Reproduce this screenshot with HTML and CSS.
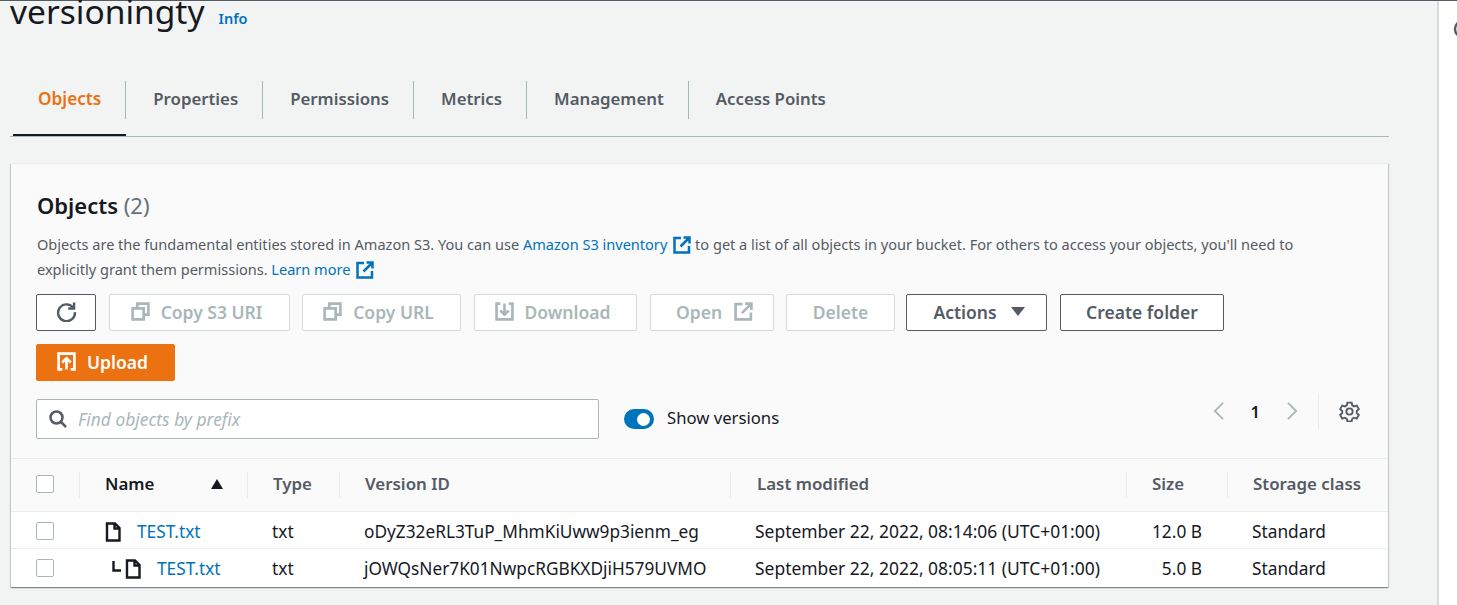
FILE: index.html
```html
<!DOCTYPE html>
<html lang="en">
<head>
  <meta charset="UTF-8">
  <title>versioningty - S3 bucket</title>
  <link rel="stylesheet" href="styles.css">
</head>
<body>
  <div class="page">
    <main class="content">
      <div class="title-row">
        <h1>versioningty</h1>
        <a class="info" href="#">Info</a>
      </div>

      <nav class="tabs">
        <a class="tab active" href="#">Objects</a>
        <a class="tab" href="#">Properties</a>
        <a class="tab" href="#">Permissions</a>
        <a class="tab" href="#">Metrics</a>
        <a class="tab" href="#">Management</a>
        <a class="tab" href="#">Access Points</a>
      </nav>

      <section class="card">
        <div class="card-head">
          <h2>Objects <span class="count">(2)</span></h2>
          <p class="desc">Objects are the fundamental entities stored in Amazon S3. You can use <a href="#">Amazon S3 inventory<svg class="ext" viewBox="0 0 18 18"><path d="M8 2H1.500v14.500H16V10M10.500 1.500h6v6M16 2L7.500 10.500"/></svg></a> to get a list of all objects in your bucket. For others to access your objects, you'll need to explicitly grant them permissions. <a href="#">Learn more<svg class="ext" viewBox="0 0 18 18"><path d="M8 2H1.500v14.500H16V10M10.500 1.500h6v6M16 2L7.500 10.500"/></svg></a></p>

          <div class="actions">
            <button class="btn refresh"><svg viewBox="0 0 20 20"><path d="M16.500 6.500A8 8 0 1 0 18 10.500"/><path d="M17.200 1.500v5.600h-5.600"/></svg></button>
            <button class="btn off lead w-s3"><svg viewBox="0 0 18 18"><path d="M1.500 6h10.500v10.500H1.500zM6 6V1.500h10.500V12H12"/></svg>Copy S3 URI</button>
            <button class="btn off lead w-url"><svg viewBox="0 0 18 18"><path d="M1.500 6h10.500v10.500H1.500zM6 6V1.500h10.500V12H12"/></svg>Copy URL</button>
            <button class="btn off lead w-dl"><svg viewBox="0 0 18 18"><path d="M5 1.500H1.500v15h15v-15H13M9 1.500V12M5 8l4 4 4-4"/></svg>Download</button>
            <button class="btn off trail w-open">Open<svg class="after" viewBox="0 0 18 18"><path d="M8 2H1.500v14.500H16V10M10.500 1.500h6v6M16 2L7.500 10.500"/></svg></button>
            <button class="btn off w-del">Delete</button>
            <button class="btn trail w-act">Actions<span class="caret"></span></button>
            <button class="btn w-new">Create folder</button>
            <button class="btn primary lead"><svg viewBox="0 0 18 18"><path d="M5 16.500H1.500v-15h15v15H13M9 16.500V6M5 10l4-4 4 4"/></svg>Upload</button>
          </div>

          <div class="filter-row">
            <div class="search">
              <svg viewBox="0 0 18 18"><circle cx="7.500" cy="7.500" r="6"/><path d="M12 12l5 5"/></svg>
              <span>Find objects by prefix</span>
            </div>
            <div class="toggle"><span class="knob"></span></div>
            <span class="toggle-label">Show versions</span>
            <div class="pager">
              <svg class="chev" viewBox="0 0 14 22"><path d="M12 2L3 11l9 9"/></svg>
              <span class="page-no">1</span>
              <svg class="chev" viewBox="0 0 14 22"><path d="M2 2l9 9-9 9"/></svg>
              <span class="pager-sep"></span>
              <svg class="gear" viewBox="0 0 20 20"><circle cx="10" cy="10" r="3"/><path d="M8 1.500h4l.6 2.600 1.700 1 2.600-.8 2 3.400-2 1.800v2l2 1.800-2 3.400-2.600-.8-1.700 1-.6 2.600H8l-.6-2.600-1.700-1-2.600.8-2-3.400 2-1.800v-2l-2-1.800 2-3.400 2.600.8 1.700-1z"/></svg>
            </div>
          </div>
        </div>

        <div class="row head">
          <div class="cell c-check"><span class="box"></span></div>
          <div class="cell c-name sep dark">Name<span class="sort"></span></div>
          <div class="cell c-type sep">Type</div>
          <div class="cell c-ver sep">Version ID</div>
          <div class="cell c-date sep">Last modified</div>
          <div class="cell c-size sep">Size</div>
          <div class="cell c-class sep">Storage class</div>
        </div>

        <div class="row">
          <div class="cell c-check"><span class="box"></span></div>
          <div class="cell c-name">
            <svg class="file" viewBox="0 0 16 20"><path d="M2 1.500h8l4.500 4.500v12.500H2zM9.500 1.500v5h5"/></svg>
            <a href="#">TEST.txt</a>
          </div>
          <div class="cell c-type">txt</div>
          <div class="cell c-ver">oDyZ32eRL3TuP_MhmKiUww9p3ienm_eg</div>
          <div class="cell c-date">September 22, 2022, 08:14:06 (UTC+01:00)</div>
          <div class="cell c-size">12.0 B</div>
          <div class="cell c-class">Standard</div>
        </div>

        <div class="row">
          <div class="cell c-check"><span class="box"></span></div>
          <div class="cell c-name nested">
            <svg class="branch" viewBox="0 0 9 11"><path d="M1.500 0v9.500H9"/></svg>
            <svg class="file" viewBox="0 0 16 20"><path d="M2 1.500h8l4.500 4.500v12.500H2zM9.500 1.500v5h5"/></svg>
            <a href="#">TEST.txt</a>
          </div>
          <div class="cell c-type">txt</div>
          <div class="cell c-ver">jOWQsNer7K01NwpcRGBKXDjiH579UVMO</div>
          <div class="cell c-date">September 22, 2022, 08:05:11 (UTC+01:00)</div>
          <div class="cell c-size">5.0 B</div>
          <div class="cell c-class">Standard</div>
        </div>
      </section>
    </main>

    <aside class="side">
      <svg viewBox="0 0 20 20"><circle cx="10" cy="10" r="8"/></svg>
    </aside>
  </div>
</body>
</html>
```
FILE: styles.css
```css
* {
  box-sizing: border-box;
}
html, body {
  margin: 0;
  height: 100%;
  overflow: hidden;
}
body {
  font-family: "Noto Sans", "Open Sans", sans-serif;
  font-size: 17.300px;
  color: #16191f;
  background: #fff;
}
a {
  color: #0073bb;
  text-decoration: none;
}
svg {
  fill: none;
  stroke: currentColor;
  stroke-width: 2;
  flex: none;
}

.page {
  display: flex;
  height: 605px;
  border-top: 1px solid #545b64;
}
.content {
  width: 1439px;
  flex: none;
  background: #f2f3f3;
  border-right: 2px solid #d5dbdb;
  padding-left: 10px;
}
.side {
  flex: 1;
  overflow: hidden;
  padding: 18px 0 0 14px;
  color: #545b64;
}
.side svg {
  width: 20px;
  height: 20px;
  stroke-width: 2.500;
}

/* title */
.title-row {
  display: flex;
  align-items: baseline;
  gap: 14px;
  height: 93px;
  margin-top: -13px;
}
h1 {
  margin: 0;
  font-size: 33.500px;
  font-weight: 400;
  line-height: 46px;
}
.info {
  font-size: 14.500px;
  font-weight: 600;
}

/* tabs */
.tabs {
  display: flex;
  width: 1379px;
  height: 56px;
  border-bottom: 1px solid #a6b8b8;
  font-size: 16.800px;
  font-weight: 600;
}
.tab {
  height: 38px;
  padding: 0 24px 0 27px;
  line-height: 36px;
  color: #545b64;
  border-right: 1px solid #a6b8b8;
  position: relative;
}
.tab:last-child {
  border-right: 0;
}
.tab.active {
  margin-left: 3px;
  padding: 0 24px 0 25px;
  font-size: 17.200px;
  color: #ec7211;
}
.tab.active::after {
  content: "";
  position: absolute;
  left: 0;
  right: -1px;
  top: 53px;
  height: 2px;
  background: #16191f;
}

/* card */
.card {
  width: 1377px;
  margin: 26px 0 0 1px;
  background: #fafafa;
  box-shadow: 0 1px 1px 0 rgba(0, 28, 36, 0.3), 1px 1px 1px 0 rgba(0, 28, 36, 0.15), -1px 1px 1px 0 rgba(0, 28, 36, 0.15);
  border-top: 1px solid #eaeded;
}
.card-head {
  padding: 24px 26px 0 26px;
  height: 295px;
  border-bottom: 1px solid #eaeded;
}
h2 {
  margin: 0;
  font-size: 22px;
  font-weight: 600;
  line-height: 34px;
}
.count {
  font-weight: 400;
  color: #687078;
}
.desc {
  max-width: 1300px;
  margin: 10px 0 0;
  font-size: 14.550px;
  line-height: 25px;
  color: #545b64;
}
.ext {
  width: 18px;
  height: 18px;
  margin-left: 6px;
  vertical-align: -4px;
  stroke-width: 2.500;
}

/* buttons */
.actions {
  display: flex;
  flex-wrap: wrap;
  gap: 13px;
  margin: 12px 0 0 -1px;
}
.btn {
  display: flex;
  align-items: center;
  justify-content: center;
  height: 37px;
  padding: 0 0 2px;
  font-family: inherit;
  font-size: 17.500px;
  font-weight: 600;
  color: #545b64;
  background: #fff;
  border: 1px solid #545b64;
  border-radius: 2px;
}
.btn.lead {
  padding-right: 6px;
}
.btn.trail {
  padding-left: 5px;
}
.btn svg {
  width: 19px;
  height: 19px;
  margin-right: 11px;
  stroke-width: 2.500;
}
.btn svg.after {
  margin: 0 0 0 12px;
}
.btn.off {
  color: #aab7b8;
  border-color: #d5dbdb;
}
.refresh {
  width: 60px;
}
.refresh svg {
  width: 21px;
  height: 21px;
  margin: 0;
  stroke-width: 2.300;
}
.w-s3 { width: 181px; }
.w-url { width: 159px; margin-left: -1px; }
.w-dl { width: 163px; }
.w-open { width: 124px; }
.w-del { width: 109px; margin-left: -1px; }
.w-act { width: 141px; margin-left: -2px; }
.w-new { width: 164px; }
.caret {
  width: 0;
  height: 0;
  margin-left: 14px;
  border: 7px solid transparent;
  border-top: 9px solid #545b64;
  border-bottom: 0;
}
.primary {
  width: 139px;
  color: #fff;
  background: #ec7211;
  border-color: #ec7211;
}

/* filter row */
.filter-row {
  display: flex;
  align-items: flex-start;
  margin: 18px 0 0 -1px;
}
.search {
  display: flex;
  align-items: center;
  gap: 11px;
  width: 563px;
  height: 40px;
  padding-left: 12px;
  background: #fff;
  border: 1px solid #aab7b8;
  border-radius: 2px;
  font-size: 17.400px;
  font-style: italic;
  color: #aab7b8;
}
.search svg {
  width: 18px;
  height: 18px;
  color: #545b64;
  stroke-width: 2.500;
}
.toggle {
  width: 30px;
  height: 20px;
  margin: 10px 0 0 25px;
  padding: 4px 3px 0 13px;
  background: #0073bb;
  border-radius: 10px;
}
.knob {
  display: block;
  width: 13px;
  height: 13px;
  background: #fff;
  border-radius: 50%;
}
.toggle-label {
  margin: 7px 0 0 13px;
  font-size: 16.700px;
  line-height: 24px;
}
.pager {
  display: flex;
  align-items: center;
  margin: -6px 0 0 auto;
  color: #aab7b8;
}
.chev {
  width: 13px;
  height: 20px;
}
.page-no {
  margin: 0 26px;
  font-size: 16.500px;
  font-weight: 600;
  color: #16191f;
}
.pager-sep {
  width: 1px;
  height: 36px;
  margin: 0 20px 0 19px;
  background: #eaeded;
}
.gear {
  width: 21px;
  height: 21px;
  margin-right: 2px;
  color: #545b64;
  stroke-width: 1.800;
}

/* table */
.row {
  display: grid;
  grid-template-columns: 68px 168px 92px 391px 396px 101px 1fr;
  height: 37px;
  background: #fff;
  border-bottom: 1px solid #eaeded;
  line-height: 36px;
  white-space: nowrap;
}
.row:last-child {
  height: 38px;
  border-bottom: 0;
}
.cell {
  display: flex;
  align-items: center;
  padding: 2px 0 0 25px;
}
.c-check {
  padding-top: 0;
}
.c-ver {
  font-size: 17.250px;
}
.c-date {
  padding-top: 0;
  font-size: 17.450px;
}
.c-size {
  justify-content: flex-end;
  padding: 2px 25px 0 0;
}
.c-name {
  padding-left: 26px;
}
.row.head {
  height: 53px;
  background: #fafafa;
  font-size: 16.900px;
  font-weight: 600;
  color: #545b64;
}
.head .cell {
  position: relative;
  padding: 0 0 2px 26px;
  font-size: 16.900px;
}
.head .c-check {
  padding-left: 25px;
}
.head .c-date {
  padding-left: 27px;
}
.head .c-size {
  justify-content: flex-start;
}
.head .sep::before {
  content: "";
  position: absolute;
  left: 0;
  top: 13px;
  height: 26px;
  width: 1px;
  background: #eaeded;
}
.dark {
  color: #16191f;
}
.box {
  width: 18px;
  height: 18px;
  background: #fff;
  border: 1px solid #aab7b8;
  border-radius: 2px;
}
.sort {
  width: 0;
  height: 0;
  margin-left: 57px;
  border: 6.500px solid transparent;
  border-bottom: 10px solid #16191f;
  border-top: 0;
}
.file {
  width: 16px;
  height: 20px;
  margin-right: 16px;
  stroke-width: 2.400;
}
.nested {
  padding-left: 33px;
}
.branch {
  width: 9px;
  height: 11px;
  margin: -6px 4px 0 0;
  stroke-width: 2.400;
}
```
